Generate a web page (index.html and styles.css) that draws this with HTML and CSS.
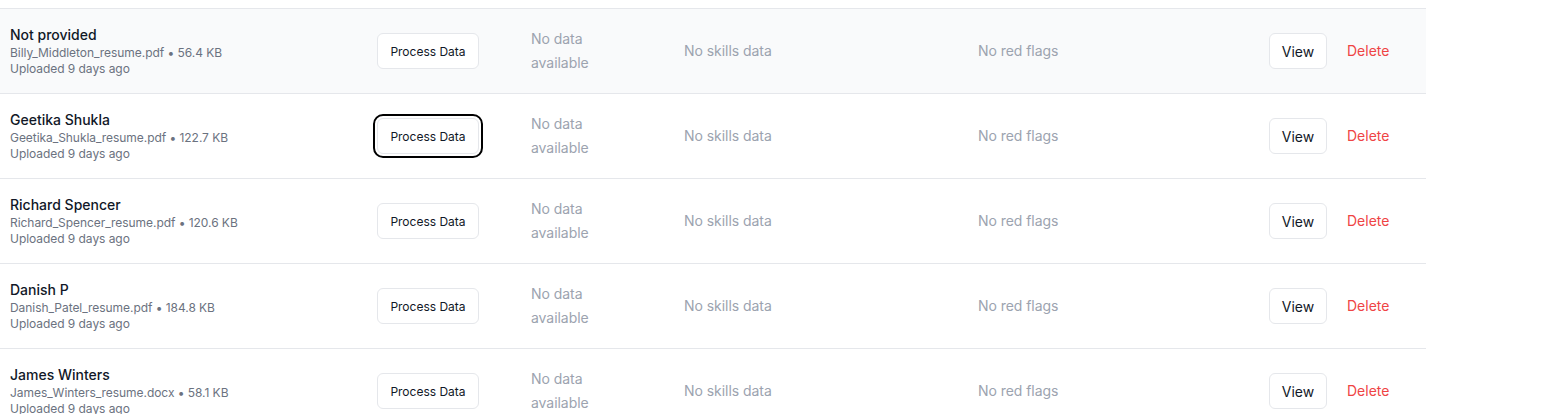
FILE: index.html
```html
<!DOCTYPE html>
<html lang="en">
<head>
<meta charset="utf-8">
<title>Resumes</title>
<link rel="stylesheet" href="styles.css">
</head>
<body>
<div class="wrap">
  <table class="resumes">
    <colgroup>
      <col class="c-name"><col class="c-proc"><col class="c-data"><col class="c-skills"><col class="c-flags"><col class="c-act">
    </colgroup>
    <tbody>
      <tr class="hover">
        <td class="cell-name"><div class="name">Not provided</div><div class="meta">Billy_Middleton_resume.pdf • 56.4 KB</div><div class="meta">Uploaded 9 days ago</div></td>
        <td><button class="btn btn-sm">Process Data</button></td>
        <td class="muted">No data available</td>
        <td class="muted">No skills data</td>
        <td class="muted">No red flags</td>
        <td><div class="actions"><button class="btn">View</button><span class="del">Delete</span></div></td>
      </tr>
      <tr>
        <td class="cell-name"><div class="name">Geetika Shukla</div><div class="meta">Geetika_Shukla_resume.pdf • 122.7 KB</div><div class="meta">Uploaded 9 days ago</div></td>
        <td><button class="btn btn-sm focused">Process Data</button></td>
        <td class="muted">No data available</td>
        <td class="muted">No skills data</td>
        <td class="muted">No red flags</td>
        <td><div class="actions"><button class="btn">View</button><span class="del">Delete</span></div></td>
      </tr>
      <tr>
        <td class="cell-name"><div class="name">Richard Spencer</div><div class="meta">Richard_Spencer_resume.pdf • 120.6 KB</div><div class="meta">Uploaded 9 days ago</div></td>
        <td><button class="btn btn-sm">Process Data</button></td>
        <td class="muted">No data available</td>
        <td class="muted">No skills data</td>
        <td class="muted">No red flags</td>
        <td><div class="actions"><button class="btn">View</button><span class="del">Delete</span></div></td>
      </tr>
      <tr>
        <td class="cell-name"><div class="name">Danish P</div><div class="meta">Danish_Patel_resume.pdf • 184.8 KB</div><div class="meta">Uploaded 9 days ago</div></td>
        <td><button class="btn btn-sm">Process Data</button></td>
        <td class="muted">No data available</td>
        <td class="muted">No skills data</td>
        <td class="muted">No red flags</td>
        <td><div class="actions"><button class="btn">View</button><span class="del">Delete</span></div></td>
      </tr>
      <tr>
        <td class="cell-name"><div class="name">James Winters</div><div class="meta">James_Winters_resume.docx • 58.1 KB</div><div class="meta">Uploaded 9 days ago</div></td>
        <td><button class="btn btn-sm">Process Data</button></td>
        <td class="muted">No data available</td>
        <td class="muted">No skills data</td>
        <td class="muted">No red flags</td>
        <td><div class="actions"><button class="btn">View</button><span class="del">Delete</span></div></td>
      </tr>
    </tbody>
  </table>
</div>
</body>
</html>
```
FILE: styles.css
```css
html, body {
  margin: 0;
  padding: 0;
  background: #ffffff;
  font-family: Inter, "Noto Sans", "Liberation Sans", sans-serif;
  color: #111827;
  overflow: hidden;
}
.wrap {
  padding-top: 8px;
}
.resumes {
  width: 1426px;
  table-layout: fixed;
  border-collapse: collapse;
  border-top: 1px solid #e5e7eb;
}
.c-name { width: 353px; }
.c-proc { width: 154px; }
.c-data { width: 153px; }
.c-skills { width: 294px; }
.c-flags { width: 291px; }
.c-act { width: 181px; }

.resumes tr {
  border-bottom: 1px solid #e5e7eb;
}
.resumes tr.hover {
  background: #f9fafb;
}
.resumes td {
  padding: 16px 24px;
  vertical-align: middle;
  font-size: 14px;
  line-height: 24px;
}
.resumes td.cell-name {
  padding-left: 10px;
}
.name {
  font-size: 14px;
  line-height: 20px;
  font-weight: 500;
  color: #111827;
}
.meta {
  font-size: 12px;
  line-height: 16px;
  color: #6b7280;
  letter-spacing: -0.05px;
}
.muted {
  color: #9ca3af;
  letter-spacing: -0.05px;
}
.btn {
  height: 36px;
  padding: 0 12px;
  border: 1px solid #e5e7eb;
  border-radius: 6px;
  background: #ffffff;
  font-family: inherit;
  font-size: 14px;
  font-weight: 400;
  color: #111827;
  box-sizing: border-box;
  cursor: pointer;
}
.btn-sm {
  font-size: 12px;
  width: 102px;
  padding: 0;
}
.focused {
  outline: 2px solid #000000;
  outline-offset: 2px;
}
.actions {
  display: flex;
  align-items: center;
  gap: 20px;
}
.actions .btn {
  width: 58px;
  padding: 0;
}
.del {
  color: #ef4444;
  font-weight: 400;
  font-size: 14px;
}
```
